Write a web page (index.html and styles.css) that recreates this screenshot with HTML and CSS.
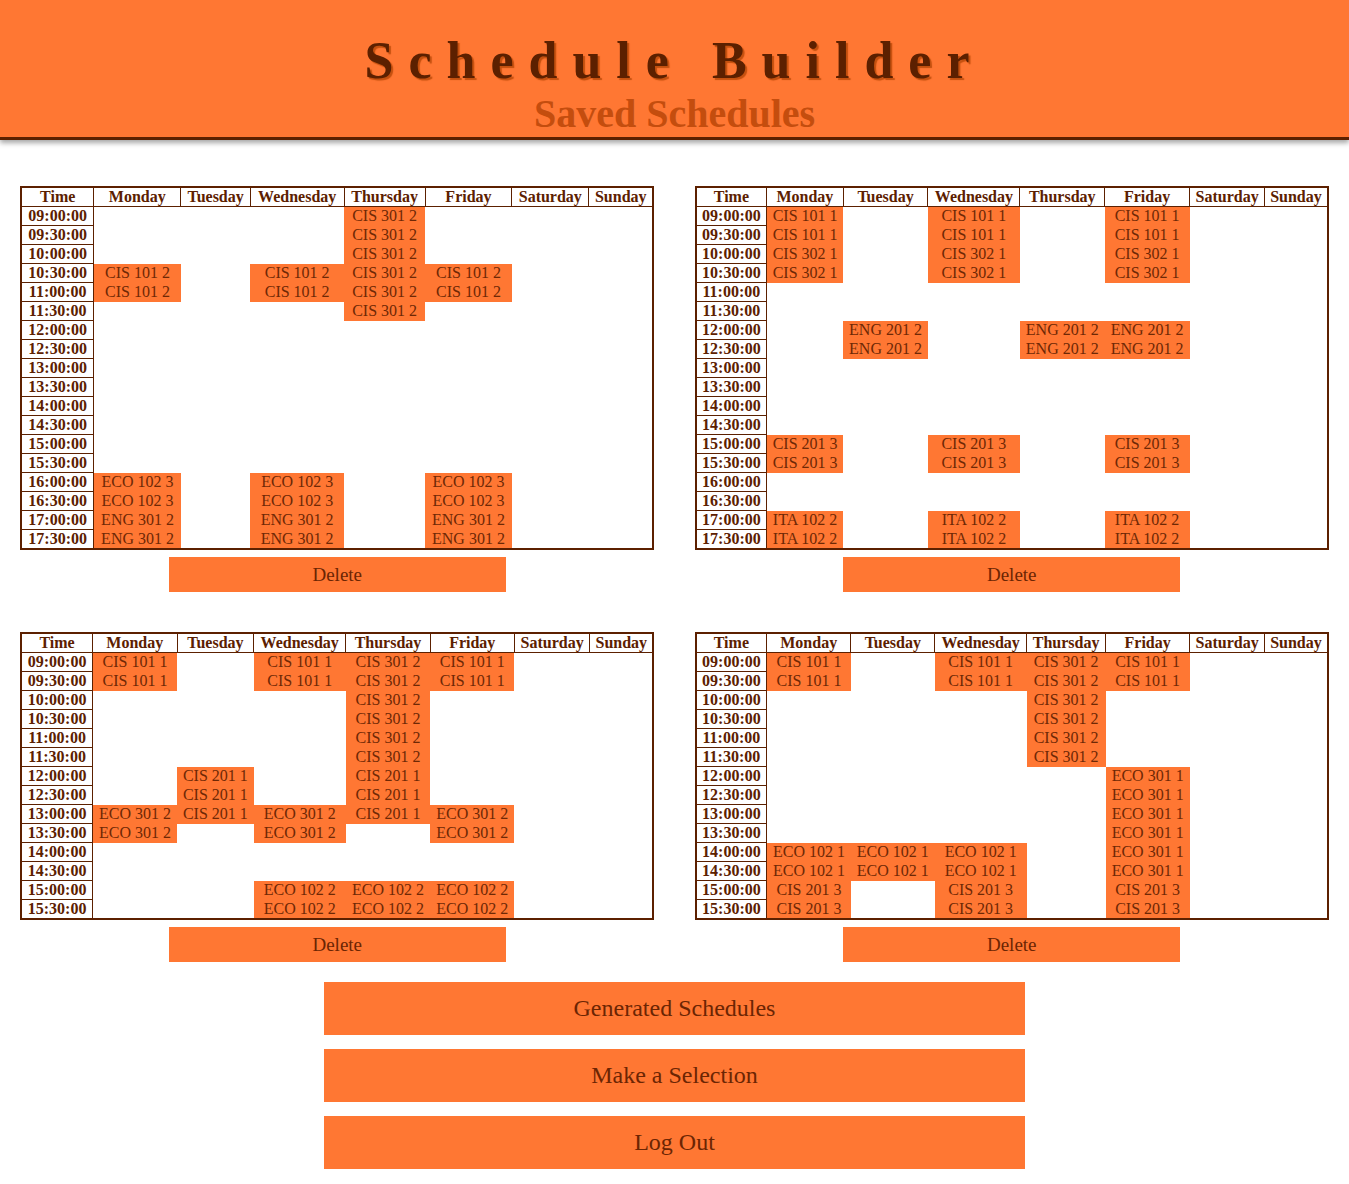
FILE: index.html
```html
<!DOCTYPE html>
<html lang="en">
<head>
  <meta charset="UTF-8" />
  <meta name="viewport" content="width=device-width, initial-scale=1.0" />
  <title>Schedule Builder</title>
  <link rel="stylesheet" href="styles.css">
</head>
<body>
  <header class="banner">
    <h1>Schedule Builder</h1>
    <h2>Saved Schedules</h2>
  </header>

  <main class="saved" id="saved-list"></main>

  <nav class="menu">
    <button type="button">Generated Schedules</button>
    <button type="button">Make a Selection</button>
    <button type="button">Log Out</button>
  </nav>

  <script src="script.js"></script>
</body>
</html>
```

FILE: styles.css
```css
body {
  font-family: "Liberation Serif", "Times New Roman", serif;
  margin: 0;
  background-color: #fff;
  color: #5c2000;
}

.banner {
  background-color: #ff7733;
  text-align: center;
  padding-top: 31px;
  border-bottom: 3px solid #5c2000;
  box-shadow: 0 3px 5px rgba(0, 0, 0, 0.35);
}

.banner h1 {
  margin: 0;
  font-size: 52px;
  line-height: 60px;
  letter-spacing: 15px;
  color: #5c2000;
  text-shadow: 2px 2px 1px #c4500f;
}

.banner h2 {
  margin: 0;
  font-size: 40px;
  line-height: 46px;
  color: #c44d0e;
}

.saved {
  display: grid;
  grid-template-columns: 1fr 1fr;
  row-gap: 40px;
  margin-top: 46px;
}

.schedule table {
  width: 94%;
  margin: 0 auto;
  border-collapse: collapse;
  border: 2px solid #5c2000;
}

.schedule th {
  border: 1px solid #5c2000;
  padding: 0 2px;
  font-size: 16px;
  line-height: 18px;
  color: #5c2000;
}

.schedule td {
  padding: 0 2px;
  font-size: 16px;
  line-height: 18px;
  text-align: center;
  color: #6e2805;
}

.schedule td.slot {
  background-color: #ff7733;
}

.delete {
  display: block;
  width: 50%;
  height: 35px;
  margin: 7px auto 0;
  background-color: #ff7733;
  border: none;
  font-family: inherit;
  font-size: 19px;
  color: #6b2503;
  cursor: pointer;
}

.menu {
  display: flex;
  flex-direction: column;
  align-items: center;
  gap: 14px;
  margin: 20px 0 15px;
}

.menu button {
  width: 52%;
  height: 53px;
  background-color: #ff7733;
  border: none;
  font-family: inherit;
  font-size: 24px;
  color: #6b2503;
  cursor: pointer;
}
```

FILE: script.js
```javascript
const days = ['Monday', 'Tuesday', 'Wednesday', 'Thursday', 'Friday', 'Saturday', 'Sunday'];
const MWF = ['Monday', 'Wednesday', 'Friday'];

const schedules = [
  {
    end: '17:30',
    blocks: [
      { course: 'CIS 301 2', days: ['Thursday'], from: '09:00', to: '11:30' },
      { course: 'CIS 101 2', days: MWF, from: '10:30', to: '11:00' },
      { course: 'ECO 102 3', days: MWF, from: '16:00', to: '16:30' },
      { course: 'ENG 301 2', days: MWF, from: '17:00', to: '17:30' }
    ]
  },
  {
    end: '17:30',
    blocks: [
      { course: 'CIS 101 1', days: MWF, from: '09:00', to: '09:30' },
      { course: 'CIS 302 1', days: MWF, from: '10:00', to: '10:30' },
      { course: 'ENG 201 2', days: ['Tuesday', 'Thursday', 'Friday'], from: '12:00', to: '12:30' },
      { course: 'CIS 201 3', days: MWF, from: '15:00', to: '15:30' },
      { course: 'ITA 102 2', days: MWF, from: '17:00', to: '17:30' }
    ]
  },
  {
    end: '15:30',
    blocks: [
      { course: 'CIS 101 1', days: MWF, from: '09:00', to: '09:30' },
      { course: 'CIS 301 2', days: ['Thursday'], from: '09:00', to: '11:30' },
      { course: 'CIS 201 1', days: ['Tuesday', 'Thursday'], from: '12:00', to: '13:00' },
      { course: 'ECO 301 2', days: MWF, from: '13:00', to: '13:30' },
      { course: 'ECO 102 2', days: ['Wednesday', 'Thursday', 'Friday'], from: '15:00', to: '15:30' }
    ]
  },
  {
    end: '15:30',
    blocks: [
      { course: 'CIS 101 1', days: MWF, from: '09:00', to: '09:30' },
      { course: 'CIS 301 2', days: ['Thursday'], from: '09:00', to: '11:30' },
      { course: 'ECO 301 1', days: ['Friday'], from: '12:00', to: '14:30' },
      { course: 'ECO 102 1', days: ['Monday', 'Tuesday', 'Wednesday'], from: '14:00', to: '14:30' },
      { course: 'CIS 201 3', days: MWF, from: '15:00', to: '15:30' }
    ]
  }
];

function toMinutes(t) {
  const [h, m] = t.split(':').map(Number);
  return h * 60 + m;
}

function label(min) {
  const h = String(Math.floor(min / 60)).padStart(2, '0');
  const m = String(min % 60).padStart(2, '0');
  return `${h}:${m}:00`;
}

function courseAt(schedule, day, min) {
  const block = schedule.blocks.find(b =>
    b.days.includes(day) && min >= toMinutes(b.from) && min <= toMinutes(b.to));
  return block ? block.course : '';
}

const list = document.getElementById('saved-list');

schedules.forEach(schedule => {
  let html = '<table><tr><th>Time</th>';
  days.forEach(d => { html += `<th>${d}</th>`; });
  html += '</tr>';

  for (let min = toMinutes('09:00'); min <= toMinutes(schedule.end); min += 30) {
    html += `<tr><th>${label(min)}</th>`;
    days.forEach(d => {
      const course = courseAt(schedule, d, min);
      html += course ? `<td class="slot">${course}</td>` : '<td></td>';
    });
    html += '</tr>';
  }
  html += '</table>';

  const box = document.createElement('div');
  box.className = 'schedule';
  box.innerHTML = html + '<button type="button" class="delete">Delete</button>';
  list.appendChild(box);
});
```
